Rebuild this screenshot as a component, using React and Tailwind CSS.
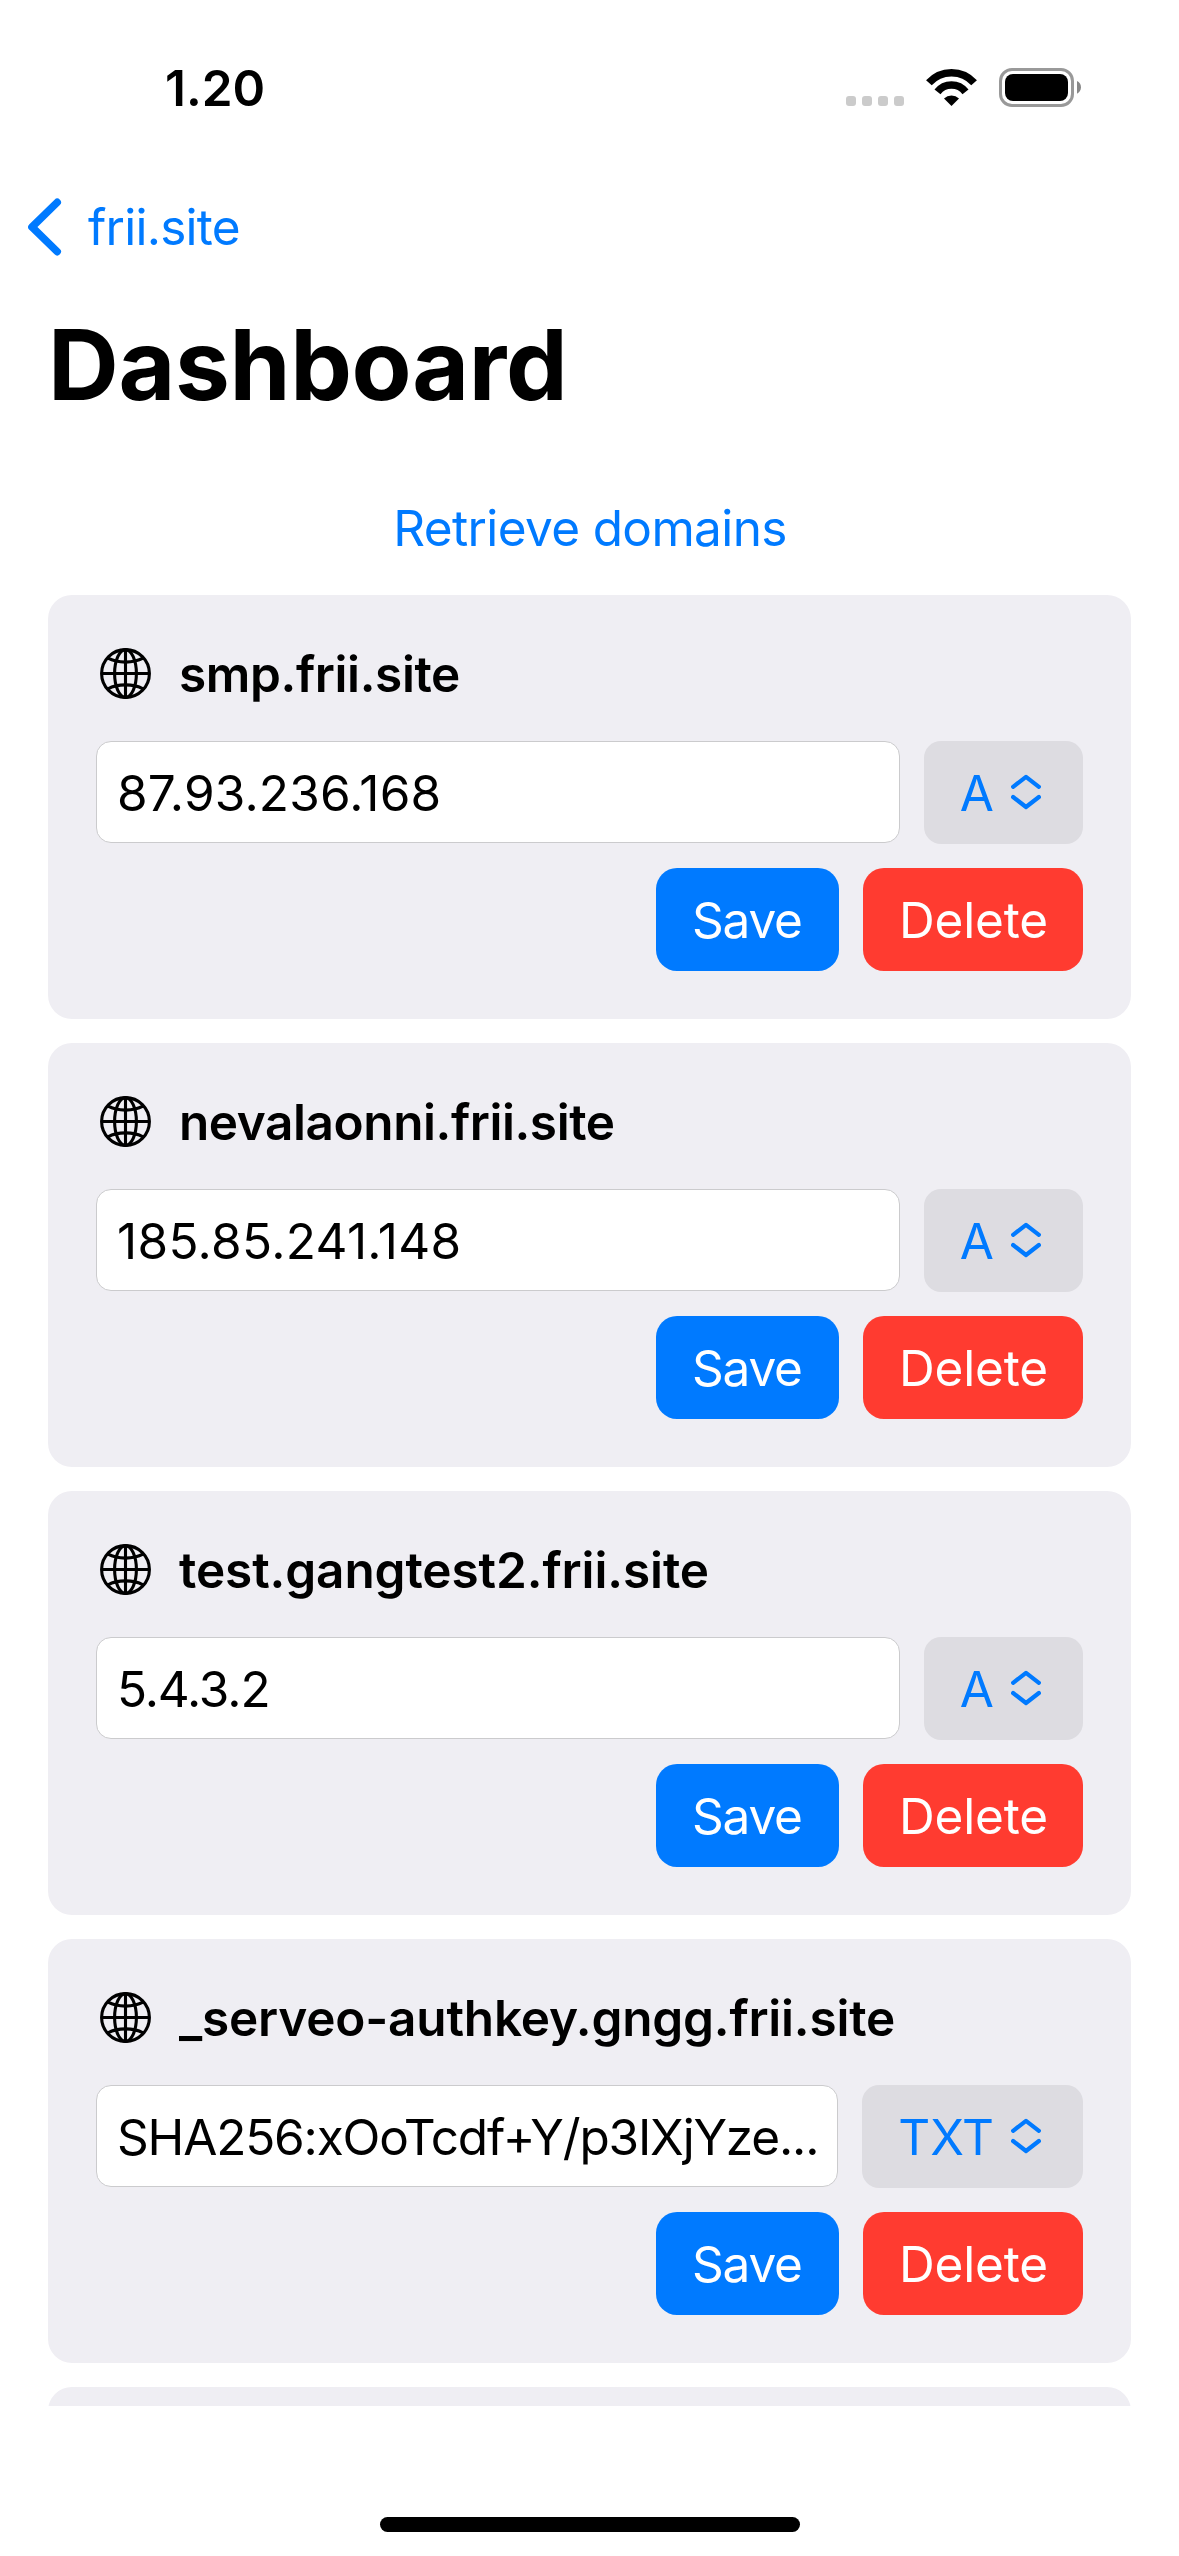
import React from "react";

const records = [
  {
    name: "smp.frii.site",
    nameSpacing: "tracking-[-0.38px]",
    value: "87.93.236.168",
    valueSpacing: "tracking-[0.18px]",
    type: "A",
  },
  {
    name: "nevalaonni.frii.site",
    nameSpacing: "tracking-[-0.42px]",
    value: "185.85.241.148",
    valueSpacing: "tracking-[0.35px]",
    type: "A",
  },
  {
    name: "test.gangtest2.frii.site",
    nameSpacing: "tracking-[-0.1px]",
    value: "5.4.3.2",
    valueSpacing: "tracking-[-1.1px]",
    type: "A",
  },
  {
    name: "_serveo-authkey.gngg.frii.site",
    nameSpacing: "tracking-[-0.2px]",
    value: "SHA256:xOoTcdf+Y/p3IXjYze...",
    valueSpacing: "tracking-[-1.18px]",
    type: "TXT",
  },
];

function WifiIcon() {
  return (
    <svg width="51" height="39" viewBox="0 0 51 39" fill="none" stroke="#000" strokeWidth="7.6">
      <path d="M2.9 14.8A30.3 30.3 0 0 1 48.1 14.8" />
      <path d="M11.5 23.8A17.7 17.7 0 0 1 39.5 23.8" />
      <path d="M25.5 38L18 30.4A11 11 0 0 1 33 30.4Z" fill="#000" stroke="none" />
    </svg>
  );
}

function BatteryIcon() {
  return (
    <svg width="83" height="39" viewBox="0 0 83 39" fill="none">
      <rect x="1.5" y="1.5" width="72" height="36" rx="11.5" stroke="#999" strokeWidth="3" />
      <rect x="6" y="6" width="63" height="27" rx="8" fill="#000" />
      <path d="M78 13C80.5 14 82 16.5 82 19.3C82 22.1 80.5 24.6 78 25.7Z" fill="#888" />
    </svg>
  );
}

function GlobeIcon() {
  return (
    <svg width="51" height="51" viewBox="0 0 51 51" fill="none" stroke="#000" strokeWidth="3.1">
      <circle cx="25.5" cy="25.5" r="23.9" />
      <ellipse cx="25.5" cy="25.5" rx="10.9" ry="23.9" />
      <path d="M25.5 1.5V49.5M1.5 25.5H49.5" />
      <path d="M8 10.2C17.5 15.4 33.5 15.4 43 10.2M8 40.8C17.5 35.6 33.5 35.6 43 40.8" />
    </svg>
  );
}

function UpDownIcon() {
  return (
    <svg
      className="-mt-px"
      width="30"
      height="36"
      viewBox="0 0 30 36"
      fill="none"
      stroke="#007aff"
      strokeWidth="4.2"
      strokeLinecap="round"
      strokeLinejoin="round"
    >
      <path d="M2.1 12.8L15 2.8L27.9 12.8M2.1 23L15 33L27.9 23" />
    </svg>
  );
}

function StatusBar() {
  return (
    <div className="flex h-[197px] justify-between pl-[165px] pr-[97px] pt-[58px]">
      <span className="font-semibold">1.20</span>
      <div className="mt-[10px] flex h-[39px]">
        <div className="mt-7 flex gap-1.5">
          <i className="size-2.5 rounded-[3px] bg-[#cbcbcb]" />
          <i className="size-2.5 rounded-[3px] bg-[#cbcbcb]" />
          <i className="size-2.5 rounded-[3px] bg-[#cbcbcb]" />
          <i className="size-2.5 rounded-[3px] bg-[#cbcbcb]" />
        </div>
        <div className="mx-[22px]">
          <WifiIcon />
        </div>
        <BatteryIcon />
      </div>
    </div>
  );
}

function RecordCard({ record }) {
  return (
    <section className="rounded-3xl bg-[#efeef3] p-12">
      <div className="mb-[37px] flex h-[61px] items-center pl-1">
        <GlobeIcon />
        <h2 className={"ml-7 font-semibold " + record.nameSpacing}>{record.name}</h2>
      </div>
      <div className="flex items-start gap-6">
        <div className="flex h-[102px] min-w-0 flex-1 items-center overflow-hidden rounded-[15px] border border-[#cbcbcd] bg-white pl-5 pt-px">
          <span className={"whitespace-nowrap " + record.valueSpacing}>{record.value}</span>
        </div>
        <button className="flex h-[103px] items-center gap-[17px] rounded-[17px] bg-[#dddce1] pl-9 pr-[42px] text-[#007aff]">
          <span>{record.type}</span>
          <UpDownIcon />
        </button>
      </div>
      <div className="mt-6 flex justify-end gap-6 text-white">
        <button className="h-[103px] w-[183px] rounded-[21px] bg-[#007aff] pl-9 text-left tracking-[-1.2px]">
          Save
        </button>
        <button className="h-[103px] w-[220px] rounded-[21px] bg-[#ff3b30] pl-9 text-left tracking-[-0.2px]">
          Delete
        </button>
      </div>
    </section>
  );
}

export default function App() {
  return (
    <div className="h-[2556px] w-[1179px] overflow-hidden bg-white font-['Inter',sans-serif] text-[49.5px] leading-[60px] text-black">
      <main className="h-[2406px] overflow-hidden">
        <StatusBar />
        <nav className="flex h-[60px] items-center pl-7 text-[#007aff]">
          <svg
            width="34"
            height="58"
            viewBox="0 0 34 58"
            fill="none"
            stroke="#007aff"
            strokeWidth="7.6"
            strokeLinecap="round"
            strokeLinejoin="round"
          >
            <path d="M29.2 4.4L4 29L29.2 53.6" />
          </svg>
          <span className="ml-[26px] tracking-[-0.75px]">frii.site</span>
        </nav>
        <h1 className="ml-12 mt-12 text-[98px] font-bold leading-[119px] tracking-[-0.35px]">Dashboard</h1>
        <button className="mx-auto mt-[74px] block pl-px tracking-[-0.63px] text-[#007aff]">Retrieve domains</button>
        <div className="mt-[37px] flex flex-col gap-6 px-12">
          {records.map((record) => (
            <RecordCard key={record.name} record={record} />
          ))}
          <section className="h-[424px] rounded-3xl bg-[#efeef3]" />
        </div>
      </main>
      <div className="mx-auto mt-[111px] h-[15px] w-[420px] rounded-full bg-black" />
    </div>
  );
}
